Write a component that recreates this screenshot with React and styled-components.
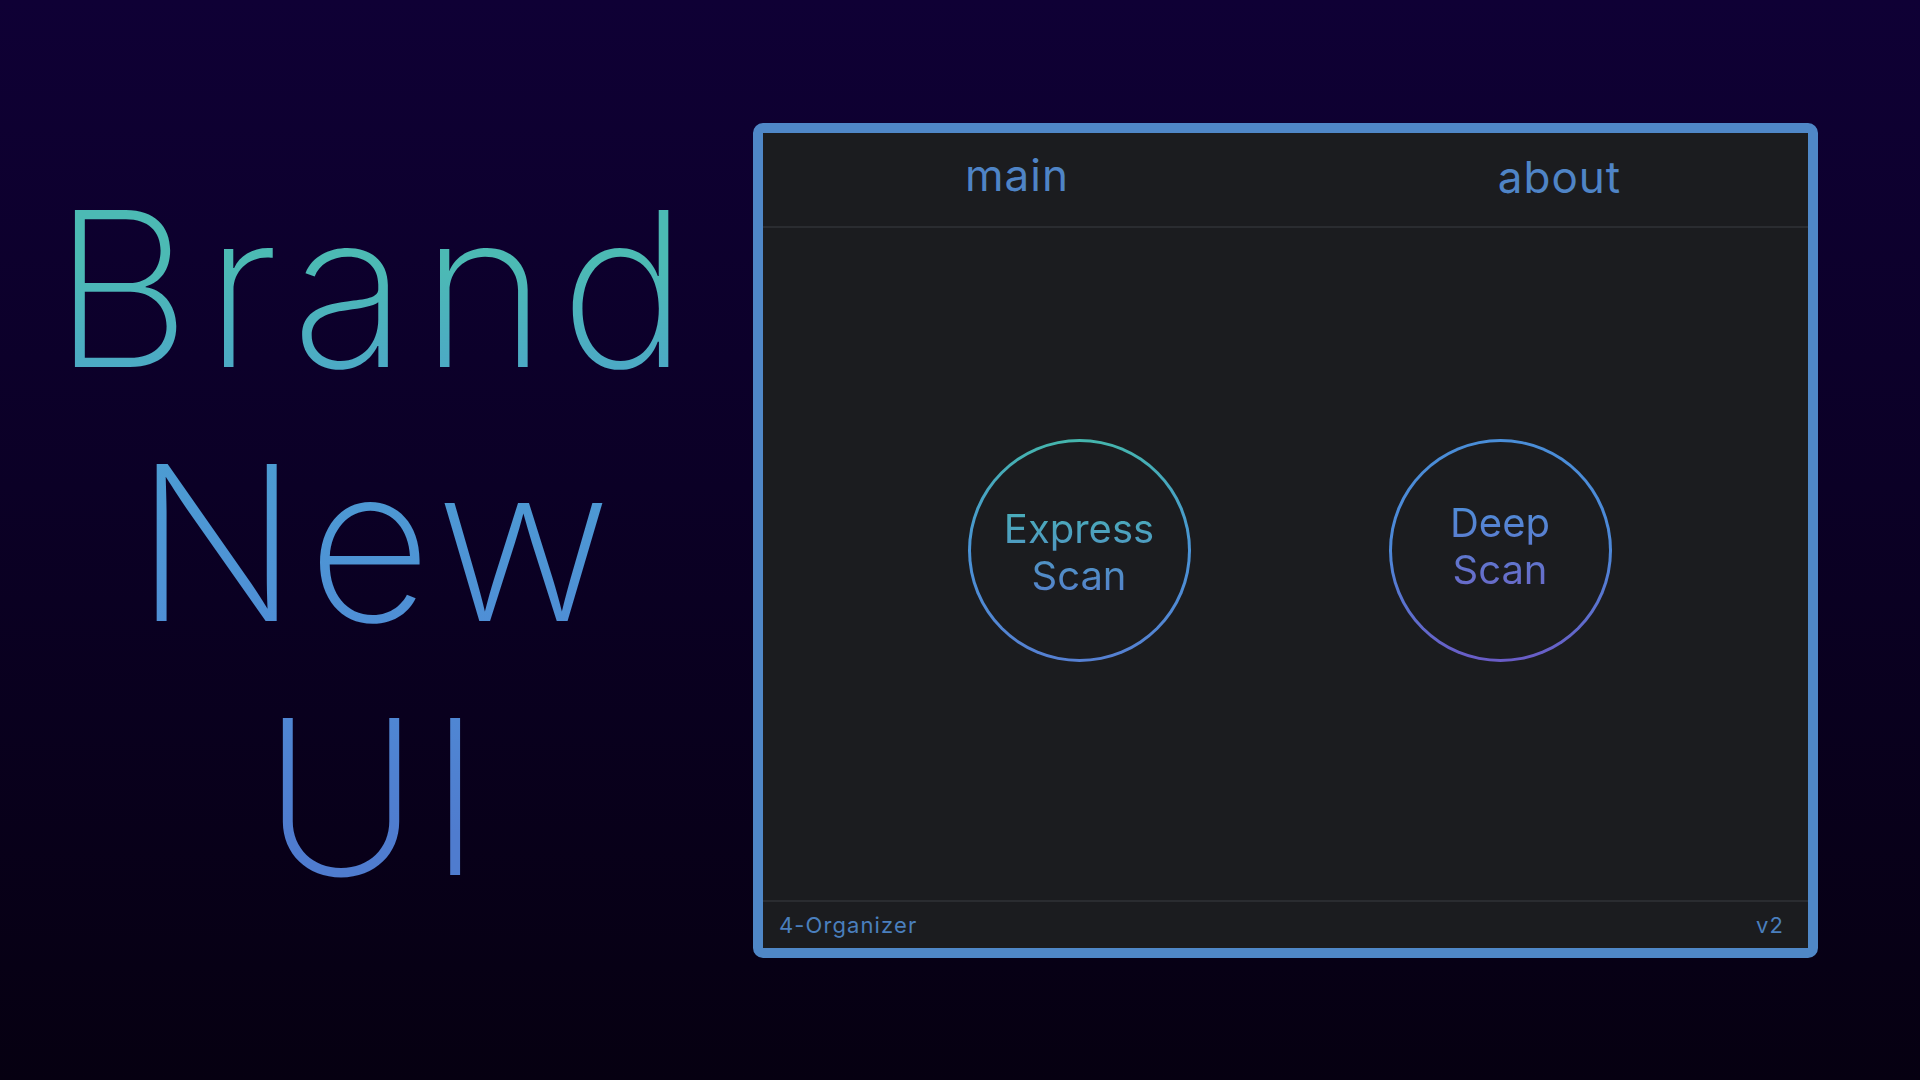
import React from 'react';
import styled, { createGlobalStyle } from 'styled-components';

const GlobalStyle = createGlobalStyle`
  html, body {
    margin: 0;
    padding: 0;
  }
  body {
    font-family: Inter, "Noto Sans", sans-serif;
    background: #07000f;
  }
`;

const Page = styled.main`
  width: 1920px;
  height: 1080px;
  display: grid;
  grid-template-columns: 753px 1065px;
  align-items: center;
  background: linear-gradient(180deg, #0f0035 0%, #0b0026 45%, #060011 100%);
  overflow: hidden;
`;

const Headline = styled.h1`
  margin: 0;
  padding-top: 6px;
  text-align: center;
  font-family: Inter, sans-serif;
  font-weight: 200;
  font-size: 216px;
  line-height: 254px;
  background: linear-gradient(180deg, #4cbab4 14%, #4c9dd2 38%, #4f8ed6 62%, #4f7ccf 88%);
  -webkit-background-clip: text;
  background-clip: text;
  color: transparent;
`;

const HeadLine = styled.span`
  display: block;
  letter-spacing: ${(p) => p.$spacing}px;
`;

// the app window on the right
const Window = styled.section`
  height: 835px;
  box-sizing: border-box;
  border: 10px solid #4f87c7;
  border-radius: 10px;
  background: #1b1c1f;
  display: flex;
  flex-direction: column;
`;

const Tabs = styled.nav`
  height: 95px;
  display: grid;
  grid-template-columns: 508px 1fr;
  align-items: center;
  padding-bottom: 8px;
  box-sizing: border-box;
  border-bottom: 2px solid #2a2c30;
`;

const Tab = styled.span`
  text-align: center;
  padding-left: ${(p) => p.$shift || 0}px;
  padding-top: ${(p) => p.$down || 0}px;
  font-size: 44px;
  font-weight: 400;
  letter-spacing: 1px;
  color: #4f84c6;
`;

const Body = styled.div`
  flex: 1;
  display: flex;
  align-items: center;
  justify-content: center;
  gap: 198px;
  padding: 0 0 26px 8px;
`;

const ScanButton = styled.button`
  width: 223px;
  height: 223px;
  border-radius: 50%;
  border: 3px solid transparent;
  background:
    linear-gradient(#1b1c1f, #1b1c1f) padding-box,
    linear-gradient(180deg, ${(p) => p.$from}, ${(p) => p.$mid} 50%, ${(p) => p.$to}) border-box;
  display: flex;
  align-items: center;
  justify-content: center;
  padding: ${(p) => p.$down || 0}px 0 ${(p) => p.$up || 0}px 0;
  cursor: pointer;
`;

const ScanLabel = styled.span`
  font-family: Inter, sans-serif;
  font-size: 40px;
  line-height: 47px;
  font-weight: 400;
  text-align: center;
  background: linear-gradient(180deg, ${(p) => p.$from}, ${(p) => p.$to});
  -webkit-background-clip: text;
  background-clip: text;
  color: transparent;

  span {
    display: block;
  }
`;

const Footer = styled.footer`
  height: 48px;
  border-top: 2px solid #2a2c30;
  box-sizing: border-box;
  display: flex;
  align-items: center;
  justify-content: space-between;
  padding: 0 24px 0 16px;
`;

const FooterText = styled.span`
  font-size: 22px;
  letter-spacing: 1.1px;
  color: #4a7fbd;
`;

export default function App() {
  return (
    <>
      <GlobalStyle />
      <Page>
        <Headline>
          <HeadLine $spacing={13}>Brand</HeadLine>
          <HeadLine $spacing={8}>New</HeadLine>
          <HeadLine $spacing={8}>UI</HeadLine>
        </Headline>

        <Window>
          <Tabs>
            <Tab>main</Tab>
            <Tab $shift={40} $down={3}>about</Tab>
          </Tabs>

          <Body>
            <ScanButton $from="#45b6ad" $mid="#4a93d6" $to="#5680d2" $down={3}>
              <ScanLabel $from="#49b0b8" $to="#557fcd">
                <span>Express</span>
                <span>Scan</span>
              </ScanLabel>
            </ScanButton>
            <ScanButton $from="#4a8ed8" $mid="#4d88d8" $to="#6a5cc6" $up={9}>
              <ScanLabel $from="#4d8fd8" $to="#6b68c8">
                <span>Deep</span>
                <span>Scan</span>
              </ScanLabel>
            </ScanButton>
          </Body>

          <Footer>
            <FooterText>4-Organizer</FooterText>
            <FooterText>v2</FooterText>
          </Footer>
        </Window>
      </Page>
    </>
  );
}
